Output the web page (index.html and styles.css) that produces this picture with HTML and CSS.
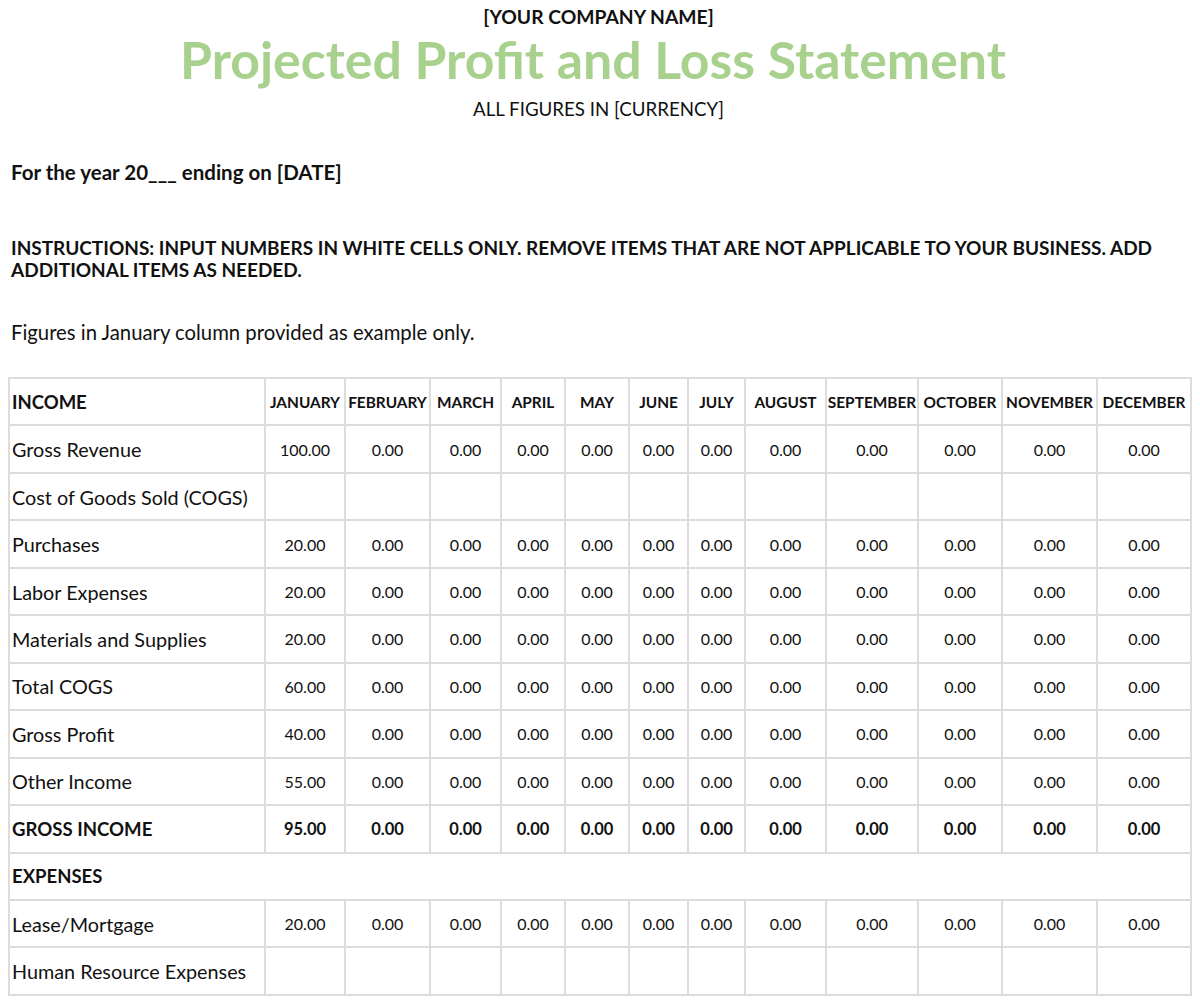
FILE: index.html
```html
<!DOCTYPE html>
<html lang="en">
<head>
<meta charset="utf-8">
<title>Projected Profit and Loss Statement</title>
<link rel="stylesheet" href="styles.css">
</head>
<body>
<header class="doc-head">
  <div class="company">[YOUR COMPANY NAME]</div>
  <h1 class="title">Projected Profit and Loss Statement</h1>
  <div class="currency">ALL FIGURES IN [CURRENCY]</div>
</header>
<p class="year">For the year 20___ ending on [DATE]</p>
<p class="instructions">INSTRUCTIONS: INPUT NUMBERS IN WHITE CELLS ONLY. REMOVE ITEMS THAT ARE NOT APPLICABLE TO YOUR BUSINESS. ADD ADDITIONAL ITEMS AS NEEDED.</p>
<p class="note">Figures in January column provided as example only.</p>
<table class="pl">
  <colgroup>
    <col class="c-label"><col class="c-jan"><col class="c-feb"><col class="c-mar"><col class="c-apr"><col class="c-may"><col class="c-jun"><col class="c-jul"><col class="c-aug"><col class="c-sep"><col class="c-oct"><col class="c-nov"><col class="c-dec">
  </colgroup>
  <thead>
    <tr class="head-row">
      <th class="section">INCOME</th>
      <th>JANUARY</th><th>FEBRUARY</th><th>MARCH</th><th>APRIL</th><th>MAY</th><th>JUNE</th><th>JULY</th><th>AUGUST</th><th>SEPTEMBER</th><th>OCTOBER</th><th>NOVEMBER</th><th>DECEMBER</th>
    </tr>
  </thead>
  <tbody>
    <tr><td class="label">Gross Revenue</td><td>100.00</td><td>0.00</td><td>0.00</td><td>0.00</td><td>0.00</td><td>0.00</td><td>0.00</td><td>0.00</td><td>0.00</td><td>0.00</td><td>0.00</td><td>0.00</td></tr>
    <tr><td class="label">Cost of Goods Sold (COGS)</td><td></td><td></td><td></td><td></td><td></td><td></td><td></td><td></td><td></td><td></td><td></td><td></td></tr>
    <tr><td class="label">Purchases</td><td>20.00</td><td>0.00</td><td>0.00</td><td>0.00</td><td>0.00</td><td>0.00</td><td>0.00</td><td>0.00</td><td>0.00</td><td>0.00</td><td>0.00</td><td>0.00</td></tr>
    <tr><td class="label">Labor Expenses</td><td>20.00</td><td>0.00</td><td>0.00</td><td>0.00</td><td>0.00</td><td>0.00</td><td>0.00</td><td>0.00</td><td>0.00</td><td>0.00</td><td>0.00</td><td>0.00</td></tr>
    <tr><td class="label">Materials and Supplies</td><td>20.00</td><td>0.00</td><td>0.00</td><td>0.00</td><td>0.00</td><td>0.00</td><td>0.00</td><td>0.00</td><td>0.00</td><td>0.00</td><td>0.00</td><td>0.00</td></tr>
    <tr><td class="label">Total COGS</td><td>60.00</td><td>0.00</td><td>0.00</td><td>0.00</td><td>0.00</td><td>0.00</td><td>0.00</td><td>0.00</td><td>0.00</td><td>0.00</td><td>0.00</td><td>0.00</td></tr>
    <tr><td class="label">Gross Profit</td><td>40.00</td><td>0.00</td><td>0.00</td><td>0.00</td><td>0.00</td><td>0.00</td><td>0.00</td><td>0.00</td><td>0.00</td><td>0.00</td><td>0.00</td><td>0.00</td></tr>
    <tr><td class="label">Other Income</td><td>55.00</td><td>0.00</td><td>0.00</td><td>0.00</td><td>0.00</td><td>0.00</td><td>0.00</td><td>0.00</td><td>0.00</td><td>0.00</td><td>0.00</td><td>0.00</td></tr>
    <tr class="total"><td class="label">GROSS INCOME</td><td>95.00</td><td>0.00</td><td>0.00</td><td>0.00</td><td>0.00</td><td>0.00</td><td>0.00</td><td>0.00</td><td>0.00</td><td>0.00</td><td>0.00</td><td>0.00</td></tr>
    <tr><td class="label section" colspan="13">EXPENSES</td></tr>
    <tr><td class="label">Lease/Mortgage</td><td>20.00</td><td>0.00</td><td>0.00</td><td>0.00</td><td>0.00</td><td>0.00</td><td>0.00</td><td>0.00</td><td>0.00</td><td>0.00</td><td>0.00</td><td>0.00</td></tr>
    <tr><td class="label">Human Resource Expenses</td><td></td><td></td><td></td><td></td><td></td><td></td><td></td><td></td><td></td><td></td><td></td><td></td></tr>
  </tbody>
</table>
</body>
</html>
```

FILE: styles.css
```css
html, body {
  margin: 0;
  padding: 0;
  background: #ffffff;
}
body {
  padding: 0 8px;
  font-family: Lato, "Liberation Sans", sans-serif;
  color: #111111;
}
.doc-head {
  text-align: center;
}
.company {
  font-size: 19.3px;
  font-weight: 700;
  line-height: 34px;
  padding-right: 3px;
}
.title {
  margin: 0;
  padding-right: 14px;
  font-size: 51.8px;
  font-weight: 700;
  line-height: 50px;
  color: #a9d18e;
}
.currency {
  font-size: 18.7px;
  line-height: 50px;
  padding-right: 3px;
}
.year {
  margin: 26px 0 0 3px;
  font-size: 20.5px;
  font-weight: 700;
  line-height: 24px;
}
.instructions {
  margin: 53px 0 0 3px;
  font-size: 19px;
  font-weight: 700;
  line-height: 22px;
}
.note {
  margin: 39px 0 0 3px;
  font-size: 20.3px;
  line-height: 24px;
}
.pl {
  margin-top: 33px;
  border-collapse: collapse;
  table-layout: fixed;
  width: 1182px;
}
.c-label { width: 256px; }
.c-jan { width: 80px; }
.c-feb { width: 85px; }
.c-mar { width: 71px; }
.c-apr { width: 64px; }
.c-may { width: 64px; }
.c-jun { width: 59px; }
.c-jul { width: 57px; }
.c-aug { width: 81px; }
.c-sep { width: 92px; }
.c-oct { width: 84px; }
.c-nov { width: 95px; }
.c-dec { width: 94px; }
.pl th, .pl td {
  border: 2px solid #dcdcdc;
  height: 45.46px;
  padding: 0;
  text-align: center;
  vertical-align: middle;
  font-size: 16px;
  white-space: nowrap;
}
.pl th {
  font-size: 15.4px;
  font-weight: 700;
}
.pl .label {
  text-align: left;
  padding-left: 2px;
  font-size: 19.8px;
}
.pl .section {
  text-align: left;
  padding-left: 2px;
  font-size: 18.5px;
  font-weight: 700;
}
.pl .total td {
  font-weight: 700;
  font-size: 16.5px;
}
.pl .total .label {
  font-size: 18.6px;
}
```
